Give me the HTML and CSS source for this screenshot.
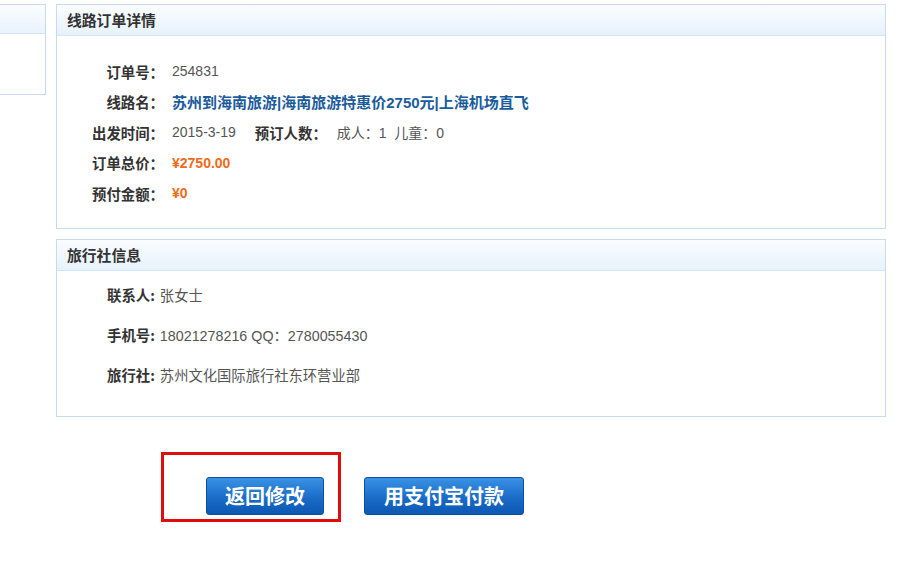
FILE: index.html
```html
<!DOCTYPE html>
<html>
<head>
<meta charset="utf-8">
<link rel="stylesheet" href="styles.css">
</head>
<body>
<div class="page">
  <div class="side">
    <div class="side-panel">
      <div class="side-head"></div>
      <div class="side-body"></div>
    </div>
  </div>
  <div class="main">
    <div class="panel panel-order">
      <div class="panel-head">线路订单详情</div>
      <div class="panel-body order-body">
        <div class="row"><span class="lbl">订单号：</span><span class="val">254831</span></div>
        <div class="row"><span class="lbl">线路名：</span><a class="link" href="#">苏州到海南旅游|海南旅游特惠价2750元|上海机场直飞</a></div>
        <div class="row"><span class="lbl">出发时间：</span><span class="val">2015-3-19</span><span class="lbl2">预订人数：</span><span class="val">成人：1&nbsp;&nbsp;儿童：0</span></div>
        <div class="row"><span class="lbl">订单总价：</span><span class="price">¥2750.00</span></div>
        <div class="row"><span class="lbl">预付金额：</span><span class="price">¥0</span></div>
      </div>
    </div>
    <div class="panel panel-agency">
      <div class="panel-head">旅行社信息</div>
      <div class="panel-body agency-body">
        <div class="arow"><span class="albl">联系人:</span><span class="aval">张女士</span></div>
        <div class="arow"><span class="albl">手机号:</span><span class="aval">18021278216 QQ：2780055430</span></div>
        <div class="arow"><span class="albl">旅行社:</span><span class="aval">苏州文化国际旅行社东环营业部</span></div>
      </div>
    </div>
    <div class="actions">
      <div class="highlight">
        <button class="btn btn-back">返回修改</button>
      </div>
      <button class="btn btn-pay">用支付宝付款</button>
    </div>
  </div>
</div>
</body>
</html>
```

FILE: styles.css
```css
* { box-sizing: border-box; }
html, body { margin: 0; padding: 0; background: #fff; }
body {
  font-family: Arial, "Liberation Sans", "Noto Sans CJK SC", sans-serif;
  font-size: 14px;
  color: #555;
}
.page {
  display: flex;
  gap: 10px;
  padding-top: 4px;
  align-items: flex-start;
}
.side { width: 46px; }
.side-panel {
  border: 1px solid #c6dcee;
  border-left: none;
  height: 91px;
}
.side-head {
  height: 29px;
  border-bottom: 1px solid #d3e5f4;
  background: linear-gradient(#fbfdff, #e8f3fc);
}
.main { width: 830px; display: flex; flex-direction: column; }
.panel {
  border: 1px solid #c6dcee;
  margin-bottom: 10px;
}
.panel-head {
  height: 31px;
  line-height: 30px;
  padding-left: 10px;
  border-bottom: 1px solid #d3e5f4;
  background: linear-gradient(#fbfdff, #e6f2fc);
  font-family: "Noto Sans CJK SC", sans-serif;
  font-weight: bold;
  font-size: 14.8px;
  color: #333;
}
.order-body { padding: 20px 0 19px 0; }
.row {
  display: flex;
  align-items: center;
  height: 30.5px;
}
.lbl {
  width: 107px;
  text-align: right;
  margin-right: 8px;
  font-family: "Noto Sans CJK SC", sans-serif;
  font-weight: bold;
  font-size: 14.4px;
  color: #333;
  white-space: nowrap;
}
.lbl2 {
  margin-left: 19px;
  margin-right: 10px;
  font-family: "Noto Sans CJK SC", sans-serif;
  font-weight: bold;
  font-size: 14.4px;
  color: #333;
}
.val {
  color: #555;
  font-family: Arial, "Liberation Sans", "Noto Sans CJK SC", sans-serif;
  white-space: nowrap;
}
.link {
  color: #1b5b9c;
  font-weight: bold;
  text-decoration: none;
  font-family: Arial, "Liberation Sans", "Noto Sans CJK SC", sans-serif;
  font-size: 15px;
}
.price {
  color: #f06a18;
  font-weight: bold;
}
.agency-body { padding: 4px 0 21px 50px; }
.arow { height: 40px; line-height: 40px; white-space: nowrap; }
.albl {
  font-family: "Noto Sans CJK SC", sans-serif;
  font-weight: bold;
  font-size: 14.4px;
  color: #333;
  margin-right: 5px;
}
.aval {
  color: #555;
  font-size: 14.3px;
}
.actions {
  display: flex;
  align-items: flex-start;
  margin-top: 25px;
  padding-left: 105px;
}
.highlight {
  width: 180px;
  height: 70px;
  border: 3px solid #e00d0d;
  padding: 22px 0 0 42px;
  margin-right: 23px;
}
.btn {
  height: 38px;
  border: 1px solid #0b4f9e;
  border-radius: 3px;
  background: linear-gradient(#3992e4, #1a6cc8 55%, #0c58b2);
  color: #fff;
  font-family: "Noto Sans CJK SC", sans-serif;
  font-weight: bold;
  font-size: 20px;
  line-height: 36px;
  padding: 0;
  cursor: pointer;
}
.btn-back { width: 118px; }
.btn-pay { width: 160px; margin-top: 25px; }
```
